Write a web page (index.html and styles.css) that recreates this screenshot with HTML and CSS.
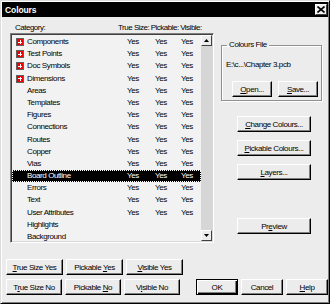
FILE: index.html
```html
<!DOCTYPE html>
<html lang="en">
  <head>
    <meta charset="utf-8" />
    <title>Colours</title>
    <link rel="stylesheet" href="styles.css">
  </head>
  <body>
    <div class="window">
      <div class="titlebar">
        <span class="title">Colours</span>
        <span class="close">
          <svg width="8" height="7" viewBox="0 0 8 7"><path d="M0.5 0.5 L7.5 6.5 M7.5 0.5 L0.5 6.5" stroke="#000" stroke-width="1.6"/></svg>
        </span>
      </div>

      <div class="main">
        <div class="left">
          <div class="headers">
            <span class="h-cat">Category:</span>
            <span class="h-col">True Size:</span>
            <span class="h-col">Pickable:</span>
            <span class="h-col">Visible:</span>
          </div>
          <div class="list">
            <div class="rows">
              <div class="row"><span class="name"><i class="plus"></i>Components</span><span>Yes</span><span>Yes</span><span>Yes</span></div>
              <div class="row"><span class="name"><i class="plus"></i>Test Points</span><span>Yes</span><span>Yes</span><span>Yes</span></div>
              <div class="row"><span class="name"><i class="plus"></i>Doc Symbols</span><span>Yes</span><span>Yes</span><span>Yes</span></div>
              <div class="row"><span class="name"><i class="plus"></i>Dimensions</span><span>Yes</span><span>Yes</span><span>Yes</span></div>
              <div class="row"><span class="name">Areas</span><span>Yes</span><span>Yes</span><span>Yes</span></div>
              <div class="row"><span class="name">Templates</span><span>Yes</span><span>Yes</span><span>Yes</span></div>
              <div class="row"><span class="name">Figures</span><span>Yes</span><span>Yes</span><span>Yes</span></div>
              <div class="row"><span class="name">Connections</span><span>Yes</span><span>Yes</span><span>Yes</span></div>
              <div class="row"><span class="name">Routes</span><span>Yes</span><span>Yes</span><span>Yes</span></div>
              <div class="row"><span class="name">Copper</span><span>Yes</span><span>Yes</span><span>Yes</span></div>
              <div class="row"><span class="name">Vias</span><span>Yes</span><span>Yes</span><span>Yes</span></div>
              <div class="row selected"><span class="name">Board Outline</span><span>Yes</span><span>Yes</span><span>Yes</span></div>
              <div class="row"><span class="name">Errors</span><span>Yes</span><span>Yes</span><span>Yes</span></div>
              <div class="row"><span class="name">Text</span><span>Yes</span><span>Yes</span><span>Yes</span></div>
              <div class="row"><span class="name">User Attributes</span><span>Yes</span><span>Yes</span><span>Yes</span></div>
              <div class="row"><span class="name">Highlights</span></div>
              <div class="row"><span class="name">Background</span></div>
            </div>
            <div class="scrollbar">
              <span class="sb-btn"><svg width="5" height="3" viewBox="0 0 5 3"><path d="M2.5 0 L5 3 L0 3 Z" fill="#000"/></svg></span>
              <span class="sb-track"></span>
              <span class="sb-btn"><svg width="5" height="3" viewBox="0 0 5 3"><path d="M0 0 L5 0 L2.5 3 Z" fill="#000"/></svg></span>
            </div>
          </div>
        </div>

        <div class="right">
          <fieldset class="group">
            <legend>Colours File</legend>
            <div class="path">E:\c...\Chapter 3.pcb</div>
            <div class="group-buttons">
              <button class="btn small"><u>O</u>pen...</button>
              <button class="btn small"><u>S</u>ave...</button>
            </div>
          </fieldset>
          <button class="btn wide first"><u>C</u>hange Colours...</button>
          <button class="btn wide"><u>P</u>ickable Colours...</button>
          <button class="btn wide"><u>L</u>ayers...</button>
          <button class="btn wide preview">Pr<u>e</u>view</button>
        </div>
      </div>

      <div class="bottom">
        <div class="btn-row">
          <button class="btn toggle"><u>T</u>rue Size Yes</button>
          <button class="btn toggle">Pickable <u>Y</u>es</button>
          <button class="btn toggle"><u>V</u>isible Yes</button>
        </div>
        <div class="btn-row">
          <button class="btn toggle">T<u>r</u>ue Size No</button>
          <button class="btn toggle">Pickable <u>N</u>o</button>
          <button class="btn toggle">V<u>i</u>sible No</button>
          <div class="dialog-buttons">
            <button class="btn action default">OK</button>
            <button class="btn action">Cancel</button>
            <button class="btn action"><u>H</u>elp</button>
          </div>
        </div>
      </div>
    </div>
  </body>
</html>
```

FILE: styles.css
```css
body {
  margin: 0;
  padding: 0;
  background-color: #ececec;
  font-family: "Liberation Sans", Arial, sans-serif;
  font-size: 8px;
  letter-spacing: -0.4px;
  color: #000;
}

.window {
  box-sizing: border-box;
  width: 330px;
  height: 304px;
  padding: 1px;
  border: 1px solid;
  border-color: #dcdcdc #000 #000 #dcdcdc;
  box-shadow: inset 1px 1px #fff, inset -1px -1px #808080;
  background-color: #ececec;
}

.titlebar {
  height: 15px;
  background-color: #000;
  color: #fff;
  display: flex;
  align-items: center;
  justify-content: space-between;
  padding: 0 1px 0 3px;
}

.title {
  font-weight: bold;
  font-size: 8.5px;
  letter-spacing: -0.1px;
}

.close {
  width: 12px;
  height: 11px;
  box-sizing: border-box;
  background-color: #f0f0f0;
  border: 1px solid;
  border-color: #fff #404040 #404040 #fff;
  display: flex;
  align-items: center;
  justify-content: center;
}

.close svg {
  display: block;
}

.main {
  display: flex;
  align-items: flex-start;
  padding: 5px 0 0 8px;
}

.left {
  width: 204px;
}

.headers {
  display: flex;
  height: 11px;
  line-height: 11px;
  letter-spacing: -0.5px;
}

.h-cat {
  width: 103px;
  padding-left: 5px;
}

.h-col {
  margin-right: 1.5px;
}

.list {
  box-sizing: border-box;
  height: 210px;
  display: flex;
  border: 1px solid;
  border-color: #808080 #fff #fff #808080;
  box-shadow: inset 1px 1px #404040, inset -1px -1px #d8d8d8;
  background-color: #f2f2f2;
  padding: 1px;
}

.rows {
  flex: 1;
  padding-top: 1px;
}

.row {
  display: grid;
  grid-template-columns: 115px 28px 26px 1fr;
  height: 12.2px;
  line-height: 12.2px;
  box-sizing: border-box;
}

.row.selected {
  background-color: #000;
  color: #fff;
  outline: 1px dotted #fff;
  outline-offset: -1px;
}

.name {
  display: flex;
  align-items: center;
  padding-left: 15px;
}

.plus {
  box-sizing: border-box;
  width: 8px;
  height: 8px;
  margin-left: -11px;
  margin-right: 3px;
  border: 1px solid #606060;
  background:
    linear-gradient(#fff, #fff) center / 4px 1px no-repeat,
    linear-gradient(#fff, #fff) center / 1px 4px no-repeat,
    #f00000;
}

.scrollbar {
  width: 11px;
  display: flex;
  flex-direction: column;
  background-color: #d6d6d6;
}

.sb-btn {
  box-sizing: border-box;
  height: 11px;
  border: 1px solid;
  border-color: #fff #404040 #404040 #fff;
  background-color: #ececec;
  display: flex;
  align-items: center;
  justify-content: center;
}

.sb-btn svg {
  display: block;
}

.sb-track {
  flex: 1;
}

.right {
  width: 101px;
  margin-left: 7px;
  margin-top: 18px;
  display: flex;
  flex-direction: column;
}

.group {
  margin: 0;
  padding: 0 0 3px 5px;
  border: 1px solid #909090;
  box-shadow: 1px 1px #fff, inset 1px 1px #fff;
  min-width: 0;
}

.group legend {
  padding: 0 2px;
  line-height: 10px;
}

.path {
  margin-top: 10px;
  margin-left: -1px;
  line-height: 10px;
}

.group-buttons {
  display: flex;
  gap: 6px;
  margin-top: 11px;
  margin-left: 5px;
}

.btn {
  box-sizing: border-box;
  height: 16px;
  padding: 0;
  font-family: inherit;
  font-size: 8px;
  letter-spacing: -0.4px;
  color: #000;
  background-color: #ececec;
  border: 1px solid;
  border-color: #fff #000 #000 #fff;
  box-shadow: inset -1px -1px #808080;
  border-radius: 0;
}

.btn u {
  text-decoration-thickness: 1px;
  text-underline-offset: 1px;
}

.small {
  width: 40px;
}

.wide {
  width: 74px;
  margin-left: 16px;
  margin-top: 8px;
}

.wide.first {
  margin-top: 15px;
}

.wide.preview {
  margin-top: 38px;
}

.bottom {
  padding: 16px 0 0 4px;
  display: flex;
  flex-direction: column;
  gap: 4px;
}

.btn-row {
  display: flex;
  gap: 3px;
}

.toggle {
  width: 57px;
}

.dialog-buttons {
  display: flex;
  gap: 3px;
  margin-left: 13px;
}

.action {
  width: 42px;
}

.action.default {
  border: 1px solid #000;
  box-shadow: inset 1px 1px #fff, inset -1px -1px #000, inset -2px -2px #808080;
}
```
